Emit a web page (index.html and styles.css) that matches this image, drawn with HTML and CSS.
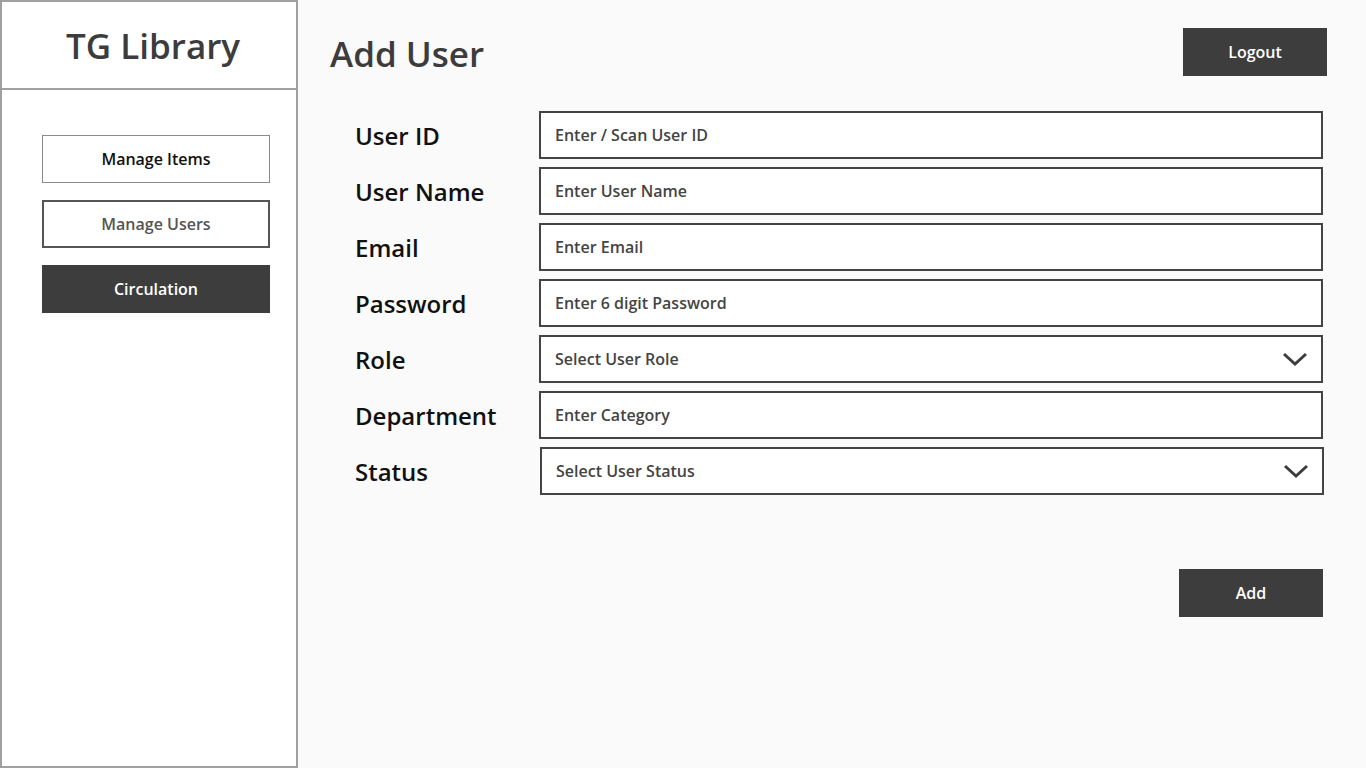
FILE: index.html
```html
<!DOCTYPE html>
<html lang="en">
<head>
<meta charset="utf-8">
<title>TG Library - Add User</title>
<link rel="stylesheet" href="styles.css">
</head>
<body>
<div class="app">
  <aside class="sidebar">
    <div class="brand">TG Library</div>
    <nav class="nav">
      <button class="nav-btn nav-btn--thin">Manage Items</button>
      <button class="nav-btn nav-btn--outline">Manage Users</button>
      <button class="nav-btn nav-btn--dark">Circulation</button>
    </nav>
  </aside>
  <main class="main">
    <header class="topbar">
      <h1 class="title">Add User</h1>
      <button class="btn-dark btn-logout">Logout</button>
    </header>
    <form class="form">
      <div class="row">
        <label class="label">User ID</label>
        <div class="field"><span class="ph">Enter / Scan User ID</span></div>
      </div>
      <div class="row">
        <label class="label">User Name</label>
        <div class="field"><span class="ph">Enter User Name</span></div>
      </div>
      <div class="row">
        <label class="label">Email</label>
        <div class="field"><span class="ph">Enter Email</span></div>
      </div>
      <div class="row">
        <label class="label">Password</label>
        <div class="field"><span class="ph">Enter 6 digit Password</span></div>
      </div>
      <div class="row">
        <label class="label">Role</label>
        <div class="field field--select"><span class="ph">Select User Role</span>
          <svg class="chev" width="26" height="16" viewBox="0 0 26 16"><polyline points="2,3 13,13 24,3" fill="none" stroke="#3d3d3d" stroke-width="3"/></svg>
        </div>
      </div>
      <div class="row">
        <label class="label">Department</label>
        <div class="field"><span class="ph">Enter Category</span></div>
      </div>
      <div class="row">
        <label class="label">Status</label>
        <div class="field field--select field--shift"><span class="ph">Select User Status</span>
          <svg class="chev" width="26" height="16" viewBox="0 0 26 16"><polyline points="2,3 13,13 24,3" fill="none" stroke="#3d3d3d" stroke-width="3"/></svg>
        </div>
      </div>
      <div class="actions">
        <button type="button" class="btn-dark btn-add">Add</button>
      </div>
    </form>
  </main>
</div>
</body>
</html>
```

FILE: styles.css
```css
* { box-sizing: border-box; }
html, body { margin: 0; padding: 0; }
body {
  font-family: "Open Sans", "Noto Sans", sans-serif;
  background: #fafafa;
  color: #111;
  width: 1366px;
  height: 768px;
  overflow: hidden;
}
.app {
  display: flex;
  height: 768px;
}
.sidebar {
  width: 298px;
  height: 768px;
  background: #fff;
  border: 2px solid #a0a0a0;
  display: flex;
  flex-direction: column;
  flex-shrink: 0;
}
.brand {
  height: 88px;
  border-bottom: 2px solid #a0a0a0;
  display: flex;
  align-items: center;
  justify-content: center;
  font-size: 35px;
  font-weight: 600;
  color: #3c3c3c;
  padding: 1px 0 0 8px;
}
.nav {
  display: flex;
  flex-direction: column;
  padding: 45px 0 0 40px;
  gap: 17px;
}
.nav-btn {
  width: 228px;
  height: 48px;
  font-family: inherit;
  font-size: 16px;
  font-weight: 600;
  background: #fff;
  cursor: pointer;
  padding: 0;
}
.nav-btn--thin {
  border: 1px solid #8a8a8a;
  color: #111;
}
.nav-btn--outline {
  border: 2px solid #555;
  color: #555;
}
.nav-btn--dark {
  border: none;
  background: #3d3d3d;
  color: #fff;
}
.main {
  flex: 1;
  padding: 28px 39px 0 32px;
}
.topbar {
  display: flex;
  justify-content: space-between;
  align-items: flex-start;
  height: 48px;
}
.title {
  margin: 0;
  font-size: 35px;
  line-height: 48px;
  font-weight: 600;
  color: #3c3c3c;
  padding-top: 2px;
}
.btn-dark {
  background: #3d3d3d;
  color: #fff;
  border: none;
  width: 144px;
  height: 48px;
  font-family: inherit;
  font-size: 16px;
  font-weight: 600;
  cursor: pointer;
}
.form {
  margin-top: 35px;
  padding-left: 25px;
  padding-right: 4px;
  display: flex;
  flex-direction: column;
  gap: 8px;
}
.row {
  display: flex;
  align-items: center;
  height: 48px;
}
.label {
  width: 184px;
  font-size: 24px;
  font-weight: 600;
  color: #111;
}
.field {
  flex: 1;
  height: 48px;
  border: 2px solid #444;
  background: #fff;
  display: flex;
  align-items: center;
  padding: 0 14px;
  position: relative;
}
.field--select {
  justify-content: space-between;
}
.field--shift {
  margin-left: 1px;
  margin-right: -1px;
}
.ph {
  font-size: 16px;
  font-weight: 600;
  color: #444;
}
.chev {
  display: block;
  margin-right: -1px;
}
.actions {
  display: flex;
  justify-content: flex-end;
  margin-top: 66px;
}
```
